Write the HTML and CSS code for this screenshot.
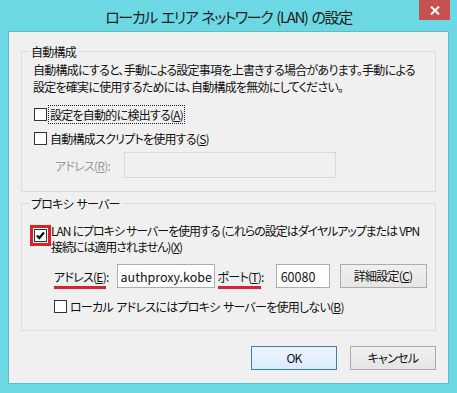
FILE: index.html
```html
<!DOCTYPE html>
<html lang="ja">
<head>
    <meta charset="UTF-8">
    <title>ローカル エリア ネットワーク (LAN) の設定</title>
    <link rel="stylesheet" href="styles.css">
</head>
<body>
<div class="window">
    <div class="titlebar">
        <span class="title">ローカル エリア ネットワーク (LAN) の設定</span>
        <span class="close">
            <svg width="10" height="9" viewBox="0 0 10 9"><path d="M1 0.5 L9 8.5 M9 0.5 L1 8.5" stroke="#fff" stroke-width="2"/></svg>
        </span>
    </div>

    <div class="client">
        <fieldset class="group group-auto">
            <legend>自動構成</legend>
            <p class="desc">自動構成にすると、手動による設定事項を上書きする場合があります。手動による<br>設定を確実に使用するためには、自動構成を無効にしてください。</p>

            <div class="check-row first">
                <span class="cb"></span>
                <span class="focus">設定を自動的に検出する(<u>A</u>)</span>
            </div>
            <div class="check-row">
                <span class="cb"></span>
                <span>自動構成スクリプトを使用する(<u>S</u>)</span>
            </div>
            <div class="addr-row disabled">
                <span class="addr-label">アドレス(<u>R</u>):</span>
                <span class="edit edit-off"></span>
            </div>
        </fieldset>

        <fieldset class="group group-proxy">
            <legend>プロキシ サーバー</legend>
            <div class="check-row multi">
                <span class="cb checked mark">
                    <svg width="11" height="11" viewBox="0 0 11 11"><path d="M2 5.5 L4.3 8 L9 2.5" fill="none" stroke="#111" stroke-width="2.2"/></svg>
                </span>
                <span>LAN にプロキシ サーバーを使用する (これらの設定はダイヤルアップまたは VPN<br>接続には適用されません)(<u>X</u>)</span>
            </div>
            <div class="proxy-row">
                <span class="lbl-addr"><span class="redline">アドレス(<u>E</u>)</span>:</span>
                <span class="edit edit-host">authproxy.kobe</span>
                <span class="lbl-port"><span class="redline">ポート(<u>T</u>)</span>:</span>
                <span class="edit edit-port">60080</span>
                <button class="btn btn-adv">詳細設定(<u>C</u>)</button>
            </div>
            <div class="check-row bypass">
                <span class="cb"></span>
                <span>ローカル アドレスにはプロキシ サーバーを使用しない(<u>B</u>)</span>
            </div>
        </fieldset>

        <div class="actions">
            <button class="btn btn-ok">OK</button>
            <button class="btn">キャンセル</button>
        </div>
    </div>
</div>
</body>
</html>
```

FILE: styles.css
```css
body {
    margin: 0;
    font-family: "Noto Sans CJK JP", "Noto Sans", sans-serif;
    font-feature-settings: "palt";
    font-size: 12px;
    color: #111;
}
.window {
    position: relative;
    width: 457px;
    height: 393px;
    background: #6cd8e3;
    display: flex;
    flex-direction: column;
    box-sizing: border-box;
    overflow: hidden;
}
.titlebar {
    height: 31px;
    display: flex;
    align-items: center;
    justify-content: center;
    flex-shrink: 0;
}
.title {
    font-size: 15px;
    letter-spacing: -1.4px;
    word-spacing: 2px;
    color: #1d1d1d;
    margin-top: 1px;
}
.close {
    position: absolute;
    top: 0;
    right: 7px;
    width: 31px;
    height: 20px;
    background: #c75050;
    display: flex;
    align-items: center;
    justify-content: center;
}
.client {
    flex: 1;
    margin: 0 8px 9px 8px;
    background: #f0f0f0;
    border: 1px solid #5ebcc7;
    padding: 11px 12px 0 12px;
    line-height: 17px;
    letter-spacing: -0.75px;
    word-spacing: 1.5px;
    white-space: nowrap;
}
.group {
    margin: 0;
    padding: 0 11px 13px 11px;
    border: 1px solid #dcdcdc;
    border-radius: 0;
    min-inline-size: 0;
}
.group legend {
    padding: 0 2px;
    margin-left: -4px;
    line-height: 17px;
}
.group-proxy {
    margin-top: 3px;
    padding-bottom: 15px;
}
.desc {
    margin: 1px 0 0 0;
}
.check-row {
    display: flex;
    align-items: center;
    height: 18px;
    margin-top: 6px;
    padding-left: 1px;
}
.check-row.first {
    margin-top: 10px;
}
.cb {
    width: 11px;
    height: 11px;
    border: 1px solid #333;
    background: #fff;
    margin-right: 3px;
    flex-shrink: 0;
    display: flex;
    align-items: center;
    justify-content: center;
}
.focus {
    outline: 1px dotted #222;
    padding: 0 1px;
    margin-left: -1px;
}
.addr-row {
    display: flex;
    align-items: center;
    margin-top: 5px;
}
.disabled {
    color: #9a9a9a;
}
.addr-label {
    margin-left: 22px;
    width: 69px;
}
.edit {
    box-sizing: border-box;
    border: 1px solid #abadb3;
    background: #fff;
    height: 24px;
    display: flex;
    align-items: center;
    padding-left: 4px;
    font-size: 12.5px;
    letter-spacing: 0;
    color: #111;
    flex-shrink: 0;
}
.edit-off {
    width: 212px;
    height: 26px;
    background: #f0f0f0;
    border-color: #d9d9d9;
}
.check-row.multi {
    align-items: flex-start;
    height: auto;
    margin-top: 11px;
    line-height: 16px;
    letter-spacing: -1.05px;
    word-spacing: 0.5px;
}
.check-row.multi .cb {
    margin-top: 6px;
    margin-right: 4px;
}
.mark {
    outline: 3px solid #dc1f2b;
    outline-offset: 1px;
}
.proxy-row {
    display: flex;
    align-items: center;
    margin-top: 9px;
}
.lbl-addr {
    margin-left: 21px;
    margin-right: 8px;
}
.redline {
    border-bottom: 3px solid #d9242c;
    padding-bottom: 1px;
}
.edit-host {
    width: 98px;
    overflow: hidden;
    padding-left: 3px;
}
.lbl-port {
    margin-left: 3px;
    margin-right: 12px;
}
.edit-port {
    width: 54px;
}
.btn {
    box-sizing: border-box;
    font: inherit;
    letter-spacing: -0.75px;
    color: #111;
    width: 86px;
    height: 24px;
    border: 1px solid #acacac;
    background: linear-gradient(#f0f0f0, #e5e5e5);
    padding: 0;
    line-height: 20px;
    flex-shrink: 0;
}
.btn-adv {
    width: 87px;
    margin-left: 10px;
}
.check-row.bypass {
    margin-top: 9px;
    padding-left: 21px;
}
.actions {
    display: flex;
    justify-content: flex-end;
    gap: 13px;
    margin-top: 15px;
}
.btn-ok {
    border-color: #3c7fb1;
    background: linear-gradient(#ecf4fc, #dcecfc);
}
```
